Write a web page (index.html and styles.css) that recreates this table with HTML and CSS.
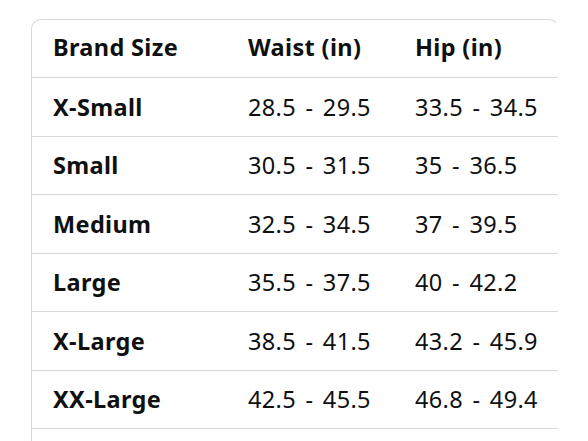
FILE: index.html
```html
<!DOCTYPE html>
<html>
<head>
<meta charset="utf-8">
<link rel="stylesheet" href="styles.css">
</head>
<body>
<div class="page">
  <div class="card">
    <div class="row head">
      <div class="cell">Brand Size</div>
      <div class="cell">Waist (in)</div>
      <div class="cell">Hip (in)</div>
    </div>
    <div class="row">
      <div class="cell label">X-Small</div>
      <div class="cell">28.5 - 29.5</div>
      <div class="cell">33.5 - 34.5</div>
    </div>
    <div class="row">
      <div class="cell label">Small</div>
      <div class="cell">30.5 - 31.5</div>
      <div class="cell">35 - 36.5</div>
    </div>
    <div class="row">
      <div class="cell label">Medium</div>
      <div class="cell">32.5 - 34.5</div>
      <div class="cell">37 - 39.5</div>
    </div>
    <div class="row">
      <div class="cell label">Large</div>
      <div class="cell">35.5 - 37.5</div>
      <div class="cell">40 - 42.2</div>
    </div>
    <div class="row">
      <div class="cell label">X-Large</div>
      <div class="cell">38.5 - 41.5</div>
      <div class="cell">43.2 - 45.9</div>
    </div>
    <div class="row">
      <div class="cell label">XX-Large</div>
      <div class="cell">42.5 - 45.5</div>
      <div class="cell">46.8 - 49.4</div>
    </div>
    <div class="row tail"></div>
  </div>
</div>
</body>
</html>
```
FILE: styles.css
```css
html, body {
  margin: 0;
  padding: 0;
  background: #ffffff;
  overflow: hidden;
}
.page {
  width: 588px;
  height: 441px;
  overflow: hidden;
  padding: 19px 0 0 31px;
  box-sizing: border-box;
  font-family: "Noto Sans", "Open Sans", sans-serif;
  color: #0f1111;
}
.card {
  width: 528px;
  box-sizing: border-box;
  border: 1px solid #d5d9d9;
  border-right-color: transparent;
  border-bottom: none;
  border-radius: 10px 10px 0 0;
}
.row {
  display: grid;
  grid-template-columns: 195px 167px 1fr;
  height: 58.5px;
  box-sizing: border-box;
  border-bottom: 1px solid #d5d9d9;
  align-items: center;
  font-size: 23.5px;
  letter-spacing: 0.35px;
  word-spacing: 3px;
}
.row.head {
  height: 58px;
  padding-bottom: 3px;
}
.row.head .cell,
.cell.label {
  font-weight: 700;
  word-spacing: 0;
}
.cell {
  padding-left: 21px;
  white-space: nowrap;
}
.row.tail {
  border-bottom: none;
  height: 40px;
}
```
